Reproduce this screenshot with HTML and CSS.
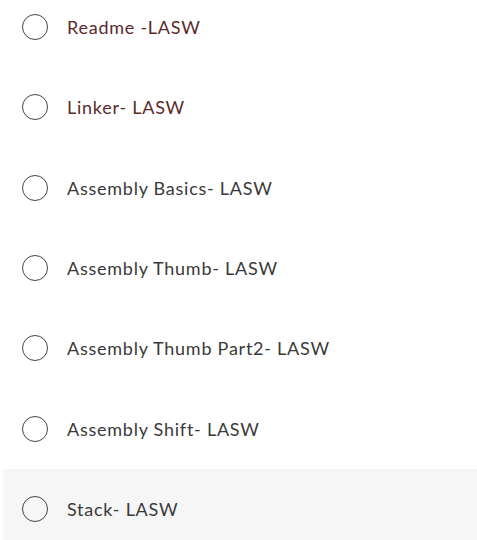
FILE: index.html
```html
<!DOCTYPE html>
<html>
<head>
<meta charset="utf-8">
<link rel="stylesheet" href="styles.css">
</head>
<body>
<ul class="list">
  <li class="item visited"><span class="radio"></span><span class="label">Readme -LASW</span></li>
  <li class="item visited"><span class="radio"></span><span class="label">Linker- LASW</span></li>
  <li class="item"><span class="radio"></span><span class="label">Assembly Basics- LASW</span></li>
  <li class="item"><span class="radio"></span><span class="label">Assembly Thumb- LASW</span></li>
  <li class="item"><span class="radio"></span><span class="label">Assembly Thumb Part2- LASW</span></li>
  <li class="item"><span class="radio"></span><span class="label">Assembly Shift- LASW</span></li>
  <li class="item active"><span class="radio"></span><span class="label">Stack- LASW</span></li>
</ul>
</body>
</html>
```
FILE: styles.css
```css
html, body {
  margin: 0;
  padding: 0;
  background: #fff;
  overflow: hidden;
}
.list {
  list-style: none;
  margin: -13px 0 0 3px;
  padding: 0;
}
.item {
  height: 80.33px;
  display: flex;
  align-items: center;
  padding-left: 19px;
  font-family: "Lato", "Liberation Sans", sans-serif;
  font-weight: 400;
  font-size: 18px;
  letter-spacing: 0.75px;
  color: #3a3a3a;
}
.item.visited { color: #5a2a2a; }
.item.active { background: #f6f6f6; }
.radio {
  width: 24px;
  height: 24px;
  border: 1px solid #444;
  border-radius: 50%;
  flex: none;
}
.label {
  margin-left: 19px;
}
```
